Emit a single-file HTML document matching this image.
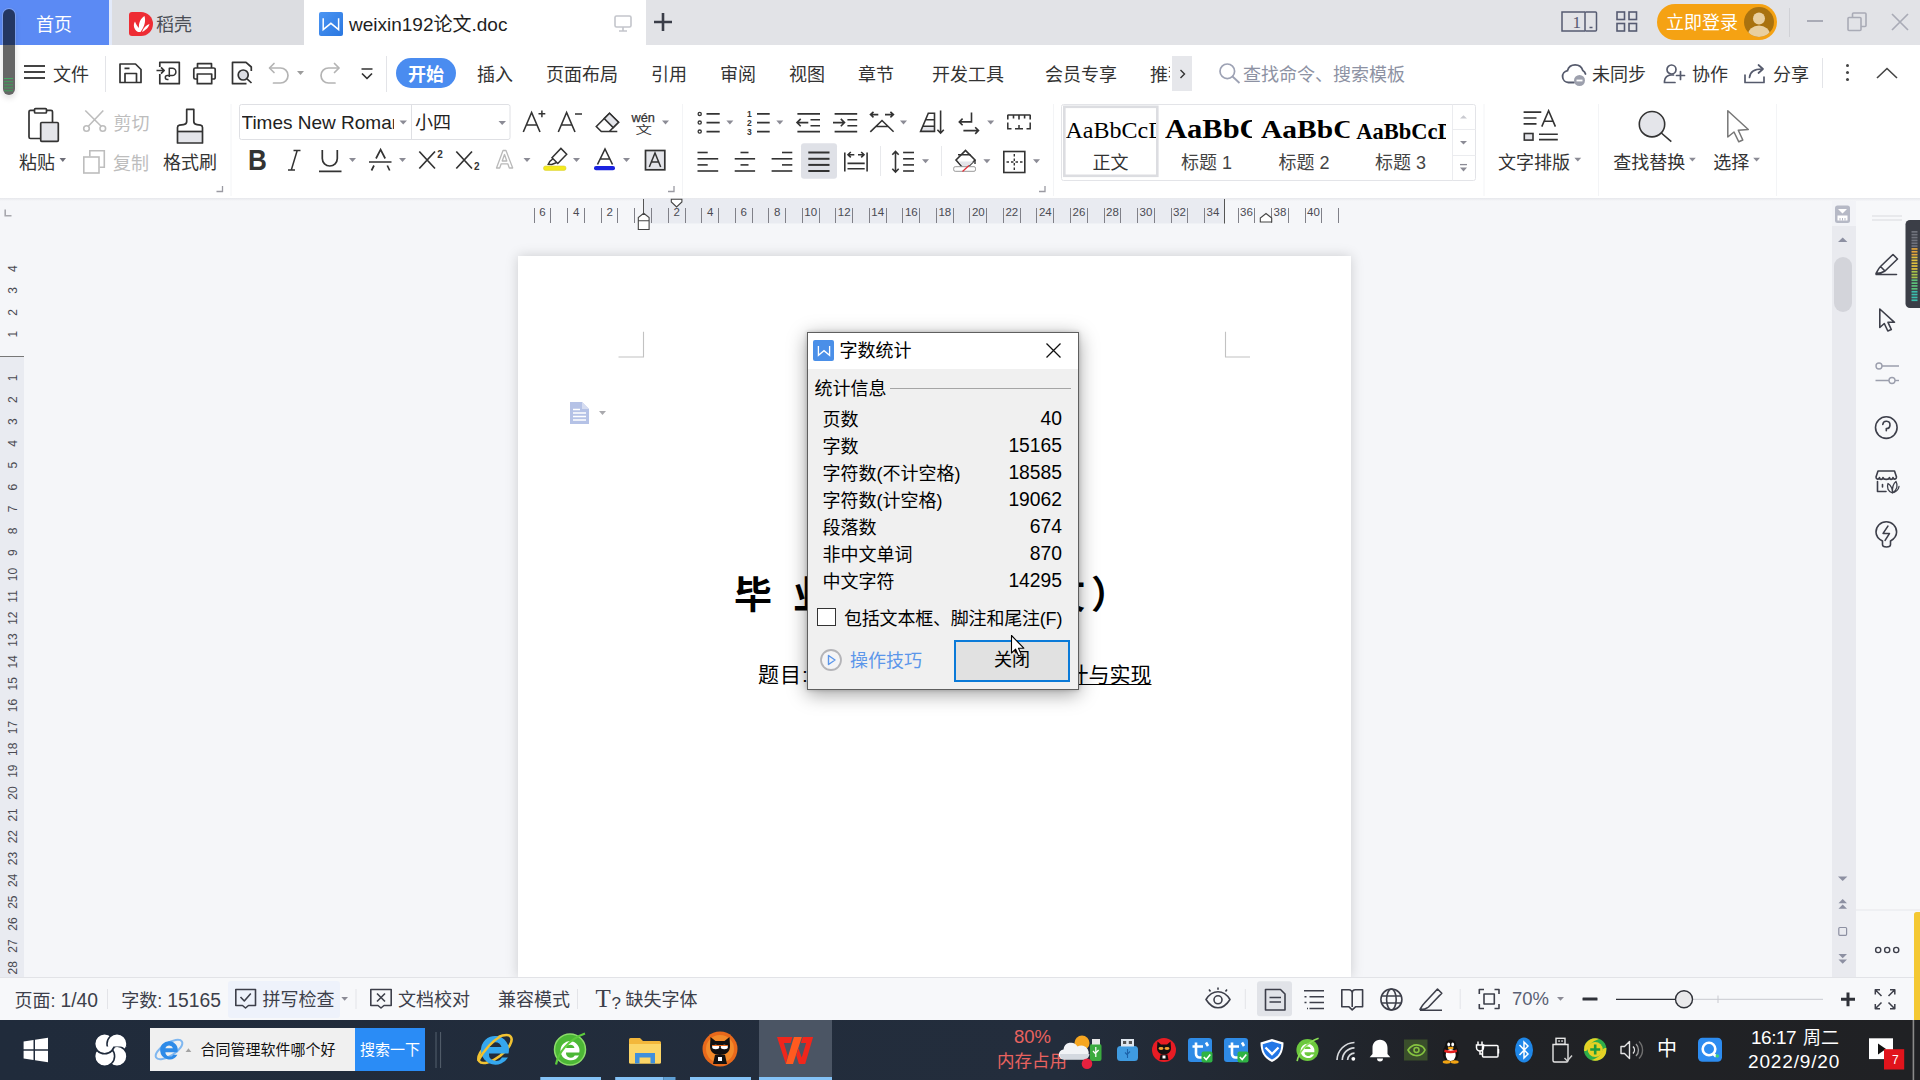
<!DOCTYPE html>
<html lang="zh-CN">
<head>
<meta charset="utf-8">
<title>weixin192论文.doc - WPS</title>
<style>
*{box-sizing:border-box;margin:0;padding:0}
html,body{width:1920px;height:1080px;overflow:hidden}
body{font-family:"Liberation Sans","Noto Sans CJK SC",sans-serif;position:relative;background:#f5f6f9;color:#333;font-size:18px}
.a{position:absolute}
.t{position:absolute;white-space:nowrap;line-height:1}
svg{position:absolute;overflow:visible}
/* ===== top tab bar ===== */
#tabbar{left:0;top:0;width:1920px;height:45px;background:#e2e3e7}
#menurow{left:0;top:45px;width:1920px;height:55px;background:#fff}
#ribbon{left:0;top:100px;width:1920px;height:98px;background:#fff}
#ribshadow{left:0;top:198px;width:1920px;height:3px;background:linear-gradient(#e6e7eb,#f5f6f9)}
#docarea{left:0;top:201px;width:1920px;height:777px;background:#f5f6f9}
#status{left:0;top:977px;width:1920px;height:43px;background:#f7f8fa;border-top:1px solid #e2e3e7}
#taskbar{left:0;top:1020px;width:1920px;height:60px;background:linear-gradient(90deg,#202b3b 0%,#232d3c 55%,#202226 76%,#202124 100%)}
#page{left:518px;top:255.500px;width:833px;height:722.500px;background:#fff;box-shadow:0 0 12px rgba(0,0,0,.17)}
.m{top:66px;font-size:18px;color:#333}
.d{font-size:18px;color:#000}
.n{font-size:19.300px}
.s{top:991px;font-size:18px;color:#3d3f4a}
</style>
</head>
<body>
<div class="a" id="tabbar"></div>
<div class="a" id="menurow"></div>
<div class="a" id="ribbon"></div>
<div class="a" id="ribshadow"></div>
<div class="a" id="docarea"></div>
<div class="a" id="page"></div>
<!--TABBAR-->
<div class="a" style="left:0;top:0;width:109px;height:45px;background:#5b8af4"></div>
<div class="t" style="left:36px;top:16px;font-size:18px;color:#fff">首页</div>
<div class="a" style="left:109px;top:0;width:3px;height:45px;background:#e3eafa"></div><div class="a" style="left:112px;top:0;width:192px;height:45px;background:#dcdde1"></div>
<svg style="left:129px;top:12px" width="24" height="24" viewBox="0 0 24 24"><path d="M3 0H12A12 12 0 0 1 12 24H3A3 3 0 0 1 0 21V3A3 3 0 0 1 3 0Z" fill="#ee2c34"/><path d="M9 20C4.500 17.500 4 12.500 6 9.500C7 12.500 8.500 14.500 10 16C9.500 11 11.500 6.500 15.500 4C17 9 15.500 15 11.500 20Z M13 20C16 18.500 19.500 16 20.500 12C17.500 13 14.500 15.500 13 20Z" fill="#fff"/></svg>
<div class="t" style="left:156px;top:16px;font-size:18px;color:#4a4d55">稻壳</div>
<div class="a" style="left:304px;top:0;width:342px;height:45px;background:#fff"></div>
<svg style="left:319px;top:12px" width="24" height="24" viewBox="0 0 24 24"><defs><linearGradient id="wg" x1="0" y1="0" x2="1" y2="1"><stop offset="0" stop-color="#4b95f3"/><stop offset="1" stop-color="#2a77e0"/></linearGradient></defs><rect width="24" height="24" rx="2" fill="url(#wg)"/><path d="M4.200 6.200V17.600L11.900 11.300L19.600 17.600V6.200" fill="none" stroke="#fff" stroke-width="1.500" stroke-linejoin="miter"/></svg>
<div class="t" id="doctitle" style="left:349px;top:15px;font-size:19px;color:#1e1e1e">weixin192论文.doc</div>
<svg style="left:614px;top:15px" width="18" height="17" viewBox="0 0 18 17"><rect x="1" y="1" width="16" height="11" rx="1.5" fill="none" stroke="#c3c5cb" stroke-width="1.6"/><path d="M9 12V15.5M5 16H13" stroke="#c3c5cb" stroke-width="1.6" fill="none"/></svg>
<svg style="left:653px;top:12px" width="20" height="20" viewBox="0 0 20 20"><path d="M10 1V19M1 10H19" stroke="#3a3d48" stroke-width="2.6" fill="none"/></svg>
<!-- right side of tab bar -->
<svg style="left:1561px;top:11px" width="37" height="21" viewBox="0 0 37 21"><path d="M24 1H1V20H24" fill="none" stroke="#565b72" stroke-width="1.5"/><rect x="24" y="1" width="11.5" height="19" rx="1" fill="none" stroke="#565b72" stroke-width="1.5"/><path d="M28.5 16.5H31.5" stroke="#565b72" stroke-width="1.5"/><text x="11.500" y="17" font-family="Liberation Serif,serif" font-size="17" fill="#565b72">1</text></svg>
<svg style="left:1616px;top:11px" width="22" height="21" viewBox="0 0 22 21"><g fill="none" stroke="#565b72" stroke-width="1.6"><rect x="1" y="1" width="7.5" height="7.5"/><rect x="13" y="1" width="7.5" height="7.5"/><rect x="1" y="12.5" width="7.5" height="7.5"/><rect x="13" y="12.5" width="7.5" height="7.5"/></g></svg>
<div class="a" style="left:1657px;top:4px;width:120px;height:36px;border-radius:18px;background:#f5a213"></div>
<div class="t" style="left:1666px;top:14px;font-size:18px;color:#fff">立即登录</div>
<svg style="left:1744px;top:7px" width="30" height="30" viewBox="0 0 30 30"><defs><clipPath id="avc"><circle cx="15" cy="15" r="15"/></clipPath></defs><circle cx="15" cy="15" r="15" fill="#a9720f"/><g clip-path="url(#avc)" fill="#e9cf9f"><circle cx="15" cy="11.5" r="6"/><ellipse cx="15" cy="28" rx="11" ry="9.5"/></g></svg>
<div class="a" style="left:1789px;top:8px;width:1px;height:29px;background:#d0d1d6"></div>
<div class="a" style="left:1807px;top:20px;width:16px;height:2px;background:#a9abb6"></div>
<svg style="left:1847px;top:12px" width="20" height="20" viewBox="0 0 20 20"><g fill="none" stroke="#a9abb6" stroke-width="1.6"><rect x="1" y="5.5" width="13" height="13" rx="1"/><path d="M5.5 5.5V2A1 1 0 0 1 6.5 1H18A1 1 0 0 1 19 2V13.500A1 1 0 0 1 18 14.500H14"/></g></svg>
<svg style="left:1891px;top:13px" width="18" height="18" viewBox="0 0 18 18"><path d="M1 1L17 17M17 1L1 17" stroke="#a9abb6" stroke-width="1.7" fill="none"/></svg>
<!--MENUROW-->
<div class="a" style="left:23.500px;top:65px;width:21.500px;height:2px;background:#444;box-shadow:0 6px 0 #444,0 12px 0 #444"></div>
<div class="t m" style="left:53px">文件</div>
<div class="a" style="left:105px;top:56px;width:1px;height:36px;background:#e3e4e8"></div>
<svg style="left:100px;top:50px" width="300" height="50" viewBox="0 0 300 50"><g fill="none" stroke="#333" stroke-width="1.7" stroke-linejoin="round">
<path d="M20 14H35.500L41 19.500V32.500H20Z"/><path d="M25 32.500V23.500H36.500V32.500M24.500 18.300H29.500"/>
<path d="M59.800 17V12.300H79.300V33.700H59.800V24"/><path d="M56.500 20.500H64M61 17.300L64.200 20.500L61 23.700"/><path d="M69.300 27V18.300H72.300A3.600 3.600 0 0 1 72.300 25.500H67.300A2 2 0 0 0 67.300 29.500H68.500" stroke-width="1.5"/>
<path d="M97.500 18V13.700H111.500V18"/><path d="M97 29H95.300A1.500 1.500 0 0 1 93.800 27.500V19.500A1.500 1.500 0 0 1 95.300 18H113.700A1.500 1.500 0 0 1 115.200 19.500V27.500A1.500 1.500 0 0 1 113.700 29H112"/><path d="M97.300 24H111.700V33.700H97.300Z"/>
<path d="M146.500 33.700H132.500V12.300H146L151.300 17V21"/><circle cx="143.200" cy="25" r="5" fill="#dcdde3"/><path d="M147 28.800L151.500 33"/>
<path d="M361.500 69H372.500M362 73.500L367 78.500L372 73.500" transform="translate(-100,-50)"/>
</g><g fill="none" stroke="#b4b4b4" stroke-width="1.7" stroke-linecap="round" stroke-linejoin="round">
<path d="M174 13.500L169.500 18L174 22.500"/><path d="M170 18H180.500A7.500 7.500 0 0 1 180.500 33H173.500"/>
<path d="M234.500 13.500L239 18L234.500 22.500"/><path d="M238.500 18H228.500A7.500 7.500 0 0 0 228.500 33H235"/>
</g><path d="M197 21H204L200.500 25Z" fill="#9c9c9c"/></svg>
<div class="a" style="left:386px;top:56px;width:1px;height:36px;background:#e3e4e8"></div>
<div class="a" style="left:396px;top:58px;width:60px;height:30px;border-radius:15px;background:#4a8cf0"></div>
<div class="t m" style="left:408px;color:#fff;font-weight:bold">开始</div>
<div class="t m" style="left:477px">插入</div>
<div class="t m" style="left:546px">页面布局</div>
<div class="t m" style="left:651px">引用</div>
<div class="t m" style="left:720px">审阅</div>
<div class="t m" style="left:789px">视图</div>
<div class="t m" style="left:858px">章节</div>
<div class="t m" style="left:932px">开发工具</div>
<div class="t m" style="left:1045px">会员专享</div>
<div class="t m" style="left:1150px;width:20px;overflow:hidden">推荐</div>
<div class="a" style="left:1172px;top:56px;width:20px;height:35px;background:#e6e7eb"></div>
<svg style="left:1179px;top:69px" width="7" height="10" viewBox="0 0 7 10"><path d="M1.500 1L5.500 5L1.500 9" fill="none" stroke="#333" stroke-width="1.400"/></svg>
<svg style="left:1218px;top:62px" width="24" height="24" viewBox="0 0 24 24"><circle cx="9.300" cy="9.300" r="7.300" fill="none" stroke="#9da2b4" stroke-width="1.700"/><path d="M14.500 14.500L21.500 21" stroke="#9da2b4" stroke-width="1.800" fill="none"/></svg>
<div class="t m" style="left:1243px;color:#8d92a3">查找命令、搜索模板</div>
<svg style="left:1561px;top:62px" width="28" height="26" viewBox="0 0 28 26"><path d="M13 20.500H7.500A6 6 0 0 1 6.500 8.600A8 8 0 0 1 21.800 8.500A5.500 5.500 0 0 1 24.500 12" fill="none" stroke="#555a6c" stroke-width="1.800" stroke-linecap="round"/><circle cx="18.500" cy="18.500" r="5.500" fill="#9da0ad"/><path d="M15.500 18.500H21.500" stroke="#fff" stroke-width="1.800"/></svg>
<div class="t m" style="left:1592px">未同步</div>
<svg style="left:1662px;top:62px" width="26" height="24" viewBox="0 0 26 24"><g fill="none" stroke="#555a6c" stroke-width="1.700" stroke-linecap="round"><circle cx="9.500" cy="7.500" r="4.500"/><path d="M13 20.500H2.500V19A6.500 6.500 0 0 1 9 13H11.500"/><path d="M18.500 9.500V17.500M14.500 13.500H22.500"/></g></svg>
<div class="t m" style="left:1692px">协作</div>
<svg style="left:1743px;top:62px" width="26" height="24" viewBox="0 0 26 24"><g fill="none" stroke="#555a6c" stroke-width="1.700" stroke-linecap="round" stroke-linejoin="round"><path d="M2 13V20.500H21V15"/><path d="M6.500 15.500C7 9.500 12 7 19 7"/><path d="M15.500 3L20 7L15.500 11"/></g></svg>
<div class="t m" style="left:1773px">分享</div>
<div class="a" style="left:1822px;top:58px;width:1px;height:30px;background:#e3e4e8"></div>
<div class="a" style="left:1846px;top:64px;width:3px;height:3px;border-radius:2px;background:#444;box-shadow:0 7px 0 #444,0 14px 0 #444"></div>
<svg style="left:1876px;top:67px" width="22" height="12" viewBox="0 0 22 12"><path d="M1 11L11 1.500L21 11" fill="none" stroke="#444" stroke-width="1.600"/></svg>
<!--RIBBON-->
<svg style="left:0;top:100px" width="1920" height="100" viewBox="0 100 1920 100"><g fill="none" stroke="#333" stroke-width="1.7" stroke-linejoin="round">
<path d="M40.500 138.500H30.500A1.500 1.500 0 0 1 29 137V111.800A1.500 1.500 0 0 1 30.500 110.300H34.500M46.500 110.300H51A1.500 1.500 0 0 1 52.500 111.800V122.500"/>
<rect x="34.500" y="108.700" width="12" height="4.300" rx="1"/>
<rect x="40.700" y="122.500" width="17.600" height="18.800" rx="1" fill="#e4e5ea"/>
<path d="M177.500 143V131.500H202.500V143Z" fill="#e4e5ea" stroke="none"/>
<path d="M186.700 109.300H193.800V121.500C193.800 123.500 195 124.300 197 124.600L200.500 125.200C201.800 125.500 202.500 126.300 202.500 127.500V143H177.500V127.500C177.500 126.300 178.200 125.500 179.500 125.200L183.500 124.600C185.500 124.300 186.700 123.500 186.700 121.500Z"/><path d="M177.500 131.500H202.500"/>
</g>
<g fill="none" stroke="#bdbdbd" stroke-width="1.600">
<path d="M85.300 110.500L101.200 126.300M103.300 110.500L88.300 126.300"/><circle cx="86.500" cy="128.500" r="2.800"/><circle cx="102.800" cy="128.500" r="2.800"/>
<path d="M89.800 156.500V150.800H104.300V167.300H99.500"/><rect x="83.800" y="157" width="15.200" height="16"/>
</g>
<path d="M59.5 158.0H66.0L62.8 162.0Z" fill="#6e6e78"/>
<path d="M222.5 186V191.500H216.5" fill="none" stroke="#9a9aa2" stroke-width="1.300"/>
<path d="M674.0 186V191.500H668.0" fill="none" stroke="#9a9aa2" stroke-width="1.300"/>
<path d="M1045.0 186V191.500H1039.0" fill="none" stroke="#9a9aa2" stroke-width="1.300"/>
<path d="M231.0 104V196" stroke="#f3f4f6" stroke-width="1"/>
<path d="M682.5 104V196" stroke="#f3f4f6" stroke-width="1"/>
<path d="M1053.5 104V196" stroke="#f3f4f6" stroke-width="1"/>
<path d="M1484.0 104V196" stroke="#f3f4f6" stroke-width="1"/>
<path d="M1598.5 104V196" stroke="#f3f4f6" stroke-width="1"/>
<path d="M1776.5 104V196" stroke="#f3f4f6" stroke-width="1"/>
<rect x="239.500" y="104.500" width="270.500" height="35" rx="2" fill="#fff" stroke="#dfe0e4" stroke-width="1"/><path d="M411.500 104.500V139.500" stroke="#dfe0e4"/>
<path d="M399.5 120.5H407.0L403.2 124.5Z" fill="#8b8b95"/>
<path d="M498.5 121.0H506.0L502.2 125.0Z" fill="#8b8b95"/>
<g fill="none" stroke="#333" stroke-width="1.700">
<path d="M293.500 150.500H300.500M288 170H295M297.200 150.500L291.300 170" stroke-width="1.500"/>
<path d="M322.300 150V158.500A7.500 7.500 0 0 0 337.300 158.500V150M319 171.300H341.500"/>
<path d="M376 158.500L380.600 149.500L385.200 158.500M374 165.500L371.500 170.500M387.300 165.500L389.700 170.500M369 162H391.500"/>
<path d="M419.300 151.500L435 168.500M435 151.500L419.300 168.500M456.300 151.500L472 168.500M472 151.500L456.300 168.500"/>
<path d="M523.300 132L531.600 112.500L540 132M526.300 125H537M558.300 132L566.600 112.500L575 132M561.300 125H572" stroke-width="1.600"/>
<path d="M538.500 113.800H545.300M541.900 110.400V117.200M575 114H582" stroke-width="1.500"/>
<path d="M596.300 126.500L609.500 113.300L618.500 122.300L609.300 131.500H601.300Z M605 131.500H617.300" stroke-width="1.600"/><path d="M609.500 113.300L618.500 122.300L613.200 127.600L604.200 118.600Z" fill="#e4e5ea" stroke-width="1.600"/>
<path d="M560.900 148.400L566.700 154.200L557.800 163.500L552 157.700Z M553 158.700L549.800 161.500L548.300 164.300L551.800 164.500L556.800 162.500" stroke-width="1.500"/>
<path d="M597.500 164.500L605 149L612.500 164.500M600.300 159H609.700" stroke-width="1.600"/>
<rect x="645.500" y="150.500" width="19.300" height="19.300" fill="#e4e5ea"/><path d="M649.300 167L655 153L660.700 167M651.500 162H658.500" stroke-width="1.500"/>
</g>
<rect x="543.500" y="166" width="22.500" height="4.400" rx="2" fill="#f4ea1c" stroke="#d8cf3a" stroke-width=".6"/>
<rect x="594" y="166" width="21" height="4.200" rx="2" fill="#1a22e0"/>
<path d="M496.500 168L503 150.500H506L512.700 168H509.300L507.800 163.800H501.200L499.700 168Z M502.200 161H506.800L504.500 154.500Z" fill="#fff" stroke="#b9b9b9" stroke-width="1.300" stroke-linejoin="round"/>
<path d="M349.0 158.0H356.0L352.5 162.0Z" fill="#8b8b95"/>
<path d="M399.0 158.0H406.0L402.5 162.0Z" fill="#8b8b95"/>
<path d="M523.5 158.0H530.5L527.0 162.0Z" fill="#8b8b95"/>
<path d="M573.0 158.0H580.0L576.5 162.0Z" fill="#8b8b95"/>
<path d="M623.0 158.0H630.0L626.5 162.0Z" fill="#8b8b95"/>
<path d="M662.0 120.5H669.0L665.5 124.5Z" fill="#8b8b95"/>
<g fill="none" stroke="#333" stroke-width="1.600">
<circle cx="699.700" cy="113.9" r="1.600" stroke-width="1.300"/><path d="M706.500 113.9H719.700M757 113.9H769.700"/>
<circle cx="699.700" cy="122.6" r="1.600" stroke-width="1.300"/><path d="M706.500 122.6H719.700M757 122.6H769.700"/>
<circle cx="699.700" cy="131.6" r="1.600" stroke-width="1.300"/><path d="M706.500 131.6H719.700M757 131.6H769.700"/>
<path d="M797.400 113.900H820M797.400 131.600H820M810.500 119.700H820M810.500 125.800H820M797 122.600H808.300M800.700 118.900L797 122.600L800.700 126.300"/>
<path d="M834.600 113.900H857.200M834.600 131.600H857.200M847.400 119.700H857.200M847.400 125.800H857.200M833 122.600H844.500M840.800 118.900L844.500 122.600L840.800 126.300"/>
<path d="M870.300 131.800L882 120.500L893.600 131.800M875.600 126.500H888.400M870.500 114.600H878.300M873.500 111.800L870.500 114.600L873.500 117.400M885 114.600H893.400M890.400 111.800L893.400 114.600L890.400 117.400"/>
<path d="M923 126.200H934.500V131.400H920.600Z" fill="#e4e5ea" stroke="none"/>
<path d="M928.300 113.300H934.500V131.400H920.600Z M925.800 119.700H934.500M923 126.200H934.500M940.600 110.500V133M937.400 129.800L940.600 133L943.800 129.800"/>
<path d="M971.500 112.400V121.900H959.300M962.600 118.600L959.300 121.900L962.600 125.200M963.400 130.600H978.500M975.200 127.300L978.500 130.600L975.200 133.900"/>
<path d="M1007.500 115H1030.500M1007.800 115V119.500M1013.500 115V118.500M1019 115V119.500M1024.600 115V118.500M1030.200 115V119.500"/>
<path d="M1007.800 122.500V128.700H1011.500M1015 128.700H1023M1019 125V128.700M1026.500 128.700H1030.200V122.500" stroke-width="1.500"/>
<path d="M697.500 152.5H707.7"/>
<path d="M740.5 152.5H748.5"/>
<path d="M782.0 152.5H792.300"/>
<path d="M903.100 152.5H914"/>
<path d="M697.500 158.8H718.2"/>
<path d="M734.7 158.8H755.1"/>
<path d="M771.6 158.8H792.300"/>
<path d="M903.100 158.8H914"/>
<path d="M697.500 164.9H707.7"/>
<path d="M740.5 164.9H748.5"/>
<path d="M782.0 164.9H792.300"/>
<path d="M903.100 164.9H914"/>
<path d="M697.500 171.0H718.2"/>
<path d="M734.7 171.0H755.1"/>
<path d="M771.6 171.0H792.300"/>
<path d="M903.100 171.0H914"/>
</g>
<rect x="801" y="143.300" width="36" height="35.500" rx="3" fill="#dfe1e7"/>
<g fill="none" stroke="#333" stroke-width="1.600">
<path d="M808.300 152.5H829.500" stroke-width="2"/>
<path d="M808.300 158.8H829.500" stroke-width="2"/>
<path d="M808.300 164.9H829.500" stroke-width="2"/>
<path d="M808.300 171.0H829.500" stroke-width="2"/>
<path d="M844.800 152.500V171.500M867.100 152.500V171.500M848 154.700H854.300M858 154.700H864M850.800 152L848 154.700L850.800 157.400M861.200 152L864 154.700L861.200 157.400M847.500 163.400H864.700M847.500 168.800H864.700"/>
<path d="M895.500 151.500V172M892.300 154.700L895.500 151.500L898.700 154.700M892.300 168.800L895.500 172L898.700 168.800"/>
<path d="M956 160L965.500 150.500L975 160L967 168H963Z" /><path d="M958.500 161.500H973.500L967 167.500H963.500Z" fill="#e4e5ea" stroke="none"/><path d="M958 154.700H970.500M975 160V164" stroke-width="1.400"/>
<rect x="953.700" y="166.700" width="21.800" height="4.600" rx="1.500" fill="#fff" stroke="#999" stroke-width="1"/><path d="M962.500 171.500L969 165.500" stroke="#e0313a" stroke-width="1.200"/>
<rect x="1003.800" y="151.500" width="21" height="21"/><path d="M1014.300 154V170M1006.500 162H1022.500" stroke-dasharray="2.500 2" stroke-width="1.400"/>
</g>
<path d="M880.500 146V176M941.500 146V176" stroke="#e8e9ec" stroke-width="1"/>
<path d="M726.4 120.5H733.4L729.9 124.5Z" fill="#8b8b95"/>
<path d="M776.3 120.5H783.3L779.8 124.5Z" fill="#8b8b95"/>
<path d="M900.0 120.5H907.0L903.5 124.5Z" fill="#8b8b95"/>
<path d="M987.2 120.5H994.2L990.7 124.5Z" fill="#8b8b95"/>
<path d="M922.0 159.3H929.0L925.5 163.3Z" fill="#8b8b95"/>
<path d="M983.4 159.3H990.4L986.9 163.3Z" fill="#8b8b95"/>
<path d="M1033.0 159.3H1040.0L1036.5 163.3Z" fill="#8b8b95"/>
<text x="747" y="117" font-family="Liberation Sans,sans-serif" font-weight="bold" font-size="8.500" fill="#333">1</text>
<text x="747" y="126" font-family="Liberation Sans,sans-serif" font-weight="bold" font-size="8.500" fill="#333">2</text>
<text x="747" y="135" font-family="Liberation Sans,sans-serif" font-weight="bold" font-size="8.500" fill="#333">3</text>
<text x="437.300" y="158.300" font-family="Liberation Sans,sans-serif" font-weight="bold" font-size="10" fill="#333">2</text><text x="474" y="170.300" font-family="Liberation Sans,sans-serif" font-weight="bold" font-size="10" fill="#333">2</text>
<text x="631.500" y="121.500" font-family="Liberation Sans,sans-serif" font-size="12.500" fill="#333" stroke="#333" stroke-width=".25" textLength="23.500" lengthAdjust="spacingAndGlyphs">wén</text>
<text x="635.500" y="134" font-family="Liberation Sans,Noto Sans CJK SC,sans-serif" font-size="16.500" fill="#333" transform="translate(0,45.500) scale(1,.66)">文</text>
<rect x="1061.500" y="104.500" width="414" height="76" rx="2" fill="#fff" stroke="#e3e4e8"/><path d="M1452.500 104.500V180.500M1452.500 129.500H1475.500M1452.500 155.500H1475.500" stroke="#ebecef"/>
<rect x="1064.300" y="106.800" width="93" height="69" fill="none" stroke="#dcdde1" stroke-width="2.600"/>
<path d="M1460 118.600H1467L1463.500 115.300Z" fill="#c9cad0"/><path d="M1460 141H1467L1463.500 144.500Z" fill="#8b8b95"/><path d="M1460 164.600H1467" stroke="#8b8b95" stroke-width="1.300"/><path d="M1460 167.500H1467L1463.500 171.500Z" fill="#8b8b95"/>
<g fill="none" stroke="#333" stroke-width="1.600">
<path d="M1523.600 112.100H1541.300M1523.600 118H1536.500M1523.600 123.900H1536.500M1539 134.200H1557.800M1539 139.600H1557.800M1541.800 126.600L1548.600 110.800L1555.400 126.600M1544 121.300H1553.200"/><rect x="1524.300" y="133.500" width="8.700" height="6.600" fill="#e4e5ea"/>
<circle cx="1652" cy="124.200" r="12.700" fill="#e4e5ea"/><path d="M1661.300 133L1671.300 141.600"/>
</g>
<path d="M1727.800 110.800V137L1734 132L1738.800 141.800L1742.800 140L1738.300 130.300L1748.300 129.500Z" fill="#fff" stroke="#777" stroke-width="1.500" stroke-linejoin="round"/>
<path d="M1574.4 157.8H1581.2L1577.8 161.6Z" fill="#8b8b95"/>
<path d="M1689.0 157.8H1695.8L1692.4 161.6Z" fill="#8b8b95"/>
<path d="M1753.2 157.8H1760.0L1756.6 161.6Z" fill="#8b8b95"/>
</svg>
<div class="t" style="left:19px;top:154px;color:#333">粘贴</div>
<div class="t" style="left:113.5px;top:115px;color:#bdbdbd">剪切</div>
<div class="t" style="left:113px;top:155px;color:#bdbdbd">复制</div>
<div class="t" style="left:163px;top:154px;color:#333">格式刷</div>
<div class="t" id="fontname" style="left:241.500px;top:110.500px;width:152px;height:24px;overflow:hidden;font-size:19px;line-height:24px;color:#222">Times New Roman</div>
<div class="t" style="left:415px;top:113.5px;color:#222">小四</div>
<div class="t" style="left:247.500px;top:144.500px;font-size:29.500px;font-weight:bold;line-height:30px;color:#333;transform:scaleX(.885);transform-origin:0 0">B</div>
<div class="t" style="left:1065.5px;top:114.5px;width:90.5px;height:30px;overflow:hidden;font-family:'Liberation Serif',serif;font-size:24px;line-height:30px;color:#000;letter-spacing:0px;transform:scaleX(1);transform-origin:0 0;">AaBbCcDd</div>
<div class="t" style="left:1165px;top:114px;width:77.4336px;height:30px;overflow:hidden;font-family:'Liberation Serif',serif;font-size:27px;line-height:30px;color:#000;letter-spacing:0px;transform:scaleX(1.13);transform-origin:0 0;font-weight:bold;">AaBbCc</div>
<div class="t" style="left:1260.7px;top:115px;width:75px;height:30px;overflow:hidden;font-family:'Liberation Serif',serif;font-size:25px;line-height:30px;color:#000;letter-spacing:0px;transform:scaleX(1.18);transform-origin:0 0;font-weight:bold;">AaBbCc</div>
<div class="t" style="left:1356.3px;top:116.5px;width:90px;height:30px;overflow:hidden;font-family:'Liberation Serif',serif;font-size:22.5px;line-height:30px;color:#000;letter-spacing:0px;transform:scaleX(1);transform-origin:0 0;font-weight:bold;">AaBbCcD</div>
<div class="t" style="left:1092.5px;top:154px;color:#333">正文</div>
<div class="t" style="left:1181px;top:154px;color:#444">标题 1</div>
<div class="t" style="left:1278.4px;top:154px;color:#444">标题 2</div>
<div class="t" style="left:1375px;top:154px;color:#444">标题 3</div>
<div class="t" style="left:1498px;top:153.5px;color:#333">文字排版</div>
<div class="t" style="left:1613.2px;top:153.5px;color:#333">查找替换</div>
<div class="t" style="left:1713.3px;top:153.5px;color:#333">选择</div>
<!--RULERS-->
<svg style="left:0;top:198px" width="1920" height="782" viewBox="0 198 1920 782" font-family="Liberation Sans,sans-serif">
<rect x="643.700" y="199" width="580.700" height="24.500" fill="#e9ebf1"/>
<rect x="0" y="356.500" width="24" height="621" fill="#e9ebf1"/>
<path d="M0 356.500H24" stroke="#777" stroke-width="1"/>
<path d="M5.200 209.500V215.800H11.500" fill="none" stroke="#a8a8ae" stroke-width="1.600"/>
<path d="M534.5 208V223M550.5 208V223M567.5 208V223M584.5 208V223M601.5 208V223M617.5 208V223M634.5 208V223M651.5 208V223M668.5 208V223M685.5 208V223M701.5 208V223M718.5 208V223M735.5 208V223M752.5 208V223M768.5 208V223M785.5 208V223M802.5 208V223M819.5 208V223M835.5 208V223M852.5 208V223M869.5 208V223M886.5 208V223M902.5 208V223M919.5 208V223M936.5 208V223M953.5 208V223M969.5 208V223M986.5 208V223M1003.5 208V223M1020.5 208V223M1036.5 208V223M1053.5 208V223M1070.5 208V223M1087.5 208V223M1104.5 208V223M1120.5 208V223M1137.5 208V223M1154.5 208V223M1171.5 208V223M1187.5 208V223M1204.5 208V223M1238.5 208V223M1254.5 208V223M1271.5 208V223M1288.5 208V223M1305.5 208V223M1321.5 208V223M1338.5 208V223" stroke="#808088" stroke-width="1" fill="none"/>
<path d="M1224.500 199V223.500M643.500 199V213.500" stroke="#555" stroke-width="1" fill="none"/>
<text x="542.5" y="215.800" font-size="11.500" fill="#4a4a52" text-anchor="middle">6</text>
<text x="576.1" y="215.800" font-size="11.500" fill="#4a4a52" text-anchor="middle">4</text>
<text x="609.6" y="215.800" font-size="11.500" fill="#4a4a52" text-anchor="middle">2</text>
<text x="676.6" y="215.800" font-size="11.500" fill="#4a4a52" text-anchor="middle">2</text>
<text x="710.1" y="215.800" font-size="11.500" fill="#4a4a52" text-anchor="middle">4</text>
<text x="743.7" y="215.800" font-size="11.500" fill="#4a4a52" text-anchor="middle">6</text>
<text x="777.2" y="215.800" font-size="11.500" fill="#4a4a52" text-anchor="middle">8</text>
<text x="810.7" y="215.800" font-size="11.500" fill="#4a4a52" text-anchor="middle">10</text>
<text x="844.2" y="215.800" font-size="11.500" fill="#4a4a52" text-anchor="middle">12</text>
<text x="877.7" y="215.800" font-size="11.500" fill="#4a4a52" text-anchor="middle">14</text>
<text x="911.3" y="215.800" font-size="11.500" fill="#4a4a52" text-anchor="middle">16</text>
<text x="944.8" y="215.800" font-size="11.500" fill="#4a4a52" text-anchor="middle">18</text>
<text x="978.3" y="215.800" font-size="11.500" fill="#4a4a52" text-anchor="middle">20</text>
<text x="1011.8" y="215.800" font-size="11.500" fill="#4a4a52" text-anchor="middle">22</text>
<text x="1045.3" y="215.800" font-size="11.500" fill="#4a4a52" text-anchor="middle">24</text>
<text x="1078.9" y="215.800" font-size="11.500" fill="#4a4a52" text-anchor="middle">26</text>
<text x="1112.4" y="215.800" font-size="11.500" fill="#4a4a52" text-anchor="middle">28</text>
<text x="1145.9" y="215.800" font-size="11.500" fill="#4a4a52" text-anchor="middle">30</text>
<text x="1179.4" y="215.800" font-size="11.500" fill="#4a4a52" text-anchor="middle">32</text>
<text x="1212.9" y="215.800" font-size="11.500" fill="#4a4a52" text-anchor="middle">34</text>
<text x="1246.5" y="215.800" font-size="11.500" fill="#4a4a52" text-anchor="middle">36</text>
<text x="1280.0" y="215.800" font-size="11.500" fill="#4a4a52" text-anchor="middle">38</text>
<text x="1313.5" y="215.800" font-size="11.500" fill="#4a4a52" text-anchor="middle">40</text>
<path d="M638.300 220.800V217.500L643.700 213.300L649.100 217.500V220.800Z M638.300 220.800H649.100V229.500H638.300Z" fill="#fff" stroke="#444" stroke-width="1.100"/>
<path d="M671.300 199.200H681.900V202L676.600 207L671.300 202Z" fill="#fff" stroke="#444" stroke-width="1.100"/>
<path d="M1260.300 222V218L1266 213.500L1271.700 218V222Z" fill="#fff" stroke="#444" stroke-width="1.100"/>
<text transform="translate(16.500,334.1) rotate(-90)" font-size="12" fill="#4a4a52" text-anchor="middle">1</text>
<text transform="translate(16.500,312.3) rotate(-90)" font-size="12" fill="#4a4a52" text-anchor="middle">2</text>
<text transform="translate(16.500,290.4) rotate(-90)" font-size="12" fill="#4a4a52" text-anchor="middle">3</text>
<text transform="translate(16.500,268.6) rotate(-90)" font-size="12" fill="#4a4a52" text-anchor="middle">4</text>
<text transform="translate(16.500,377.9) rotate(-90)" font-size="12" fill="#4a4a52" text-anchor="middle">1</text>
<text transform="translate(16.500,399.7) rotate(-90)" font-size="12" fill="#4a4a52" text-anchor="middle">2</text>
<text transform="translate(16.500,421.6) rotate(-90)" font-size="12" fill="#4a4a52" text-anchor="middle">3</text>
<text transform="translate(16.500,443.4) rotate(-90)" font-size="12" fill="#4a4a52" text-anchor="middle">4</text>
<text transform="translate(16.500,465.2) rotate(-90)" font-size="12" fill="#4a4a52" text-anchor="middle">5</text>
<text transform="translate(16.500,487.1) rotate(-90)" font-size="12" fill="#4a4a52" text-anchor="middle">6</text>
<text transform="translate(16.500,509.0) rotate(-90)" font-size="12" fill="#4a4a52" text-anchor="middle">7</text>
<text transform="translate(16.500,530.8) rotate(-90)" font-size="12" fill="#4a4a52" text-anchor="middle">8</text>
<text transform="translate(16.500,552.6) rotate(-90)" font-size="12" fill="#4a4a52" text-anchor="middle">9</text>
<text transform="translate(16.500,574.5) rotate(-90)" font-size="12" fill="#4a4a52" text-anchor="middle">10</text>
<text transform="translate(16.500,596.4) rotate(-90)" font-size="12" fill="#4a4a52" text-anchor="middle">11</text>
<text transform="translate(16.500,618.2) rotate(-90)" font-size="12" fill="#4a4a52" text-anchor="middle">12</text>
<text transform="translate(16.500,640.0) rotate(-90)" font-size="12" fill="#4a4a52" text-anchor="middle">13</text>
<text transform="translate(16.500,661.9) rotate(-90)" font-size="12" fill="#4a4a52" text-anchor="middle">14</text>
<text transform="translate(16.500,683.8) rotate(-90)" font-size="12" fill="#4a4a52" text-anchor="middle">15</text>
<text transform="translate(16.500,705.6) rotate(-90)" font-size="12" fill="#4a4a52" text-anchor="middle">16</text>
<text transform="translate(16.500,727.5) rotate(-90)" font-size="12" fill="#4a4a52" text-anchor="middle">17</text>
<text transform="translate(16.500,749.3) rotate(-90)" font-size="12" fill="#4a4a52" text-anchor="middle">18</text>
<text transform="translate(16.500,771.2) rotate(-90)" font-size="12" fill="#4a4a52" text-anchor="middle">19</text>
<text transform="translate(16.500,793.0) rotate(-90)" font-size="12" fill="#4a4a52" text-anchor="middle">20</text>
<text transform="translate(16.500,814.9) rotate(-90)" font-size="12" fill="#4a4a52" text-anchor="middle">21</text>
<text transform="translate(16.500,836.7) rotate(-90)" font-size="12" fill="#4a4a52" text-anchor="middle">22</text>
<text transform="translate(16.500,858.5) rotate(-90)" font-size="12" fill="#4a4a52" text-anchor="middle">23</text>
<text transform="translate(16.500,880.4) rotate(-90)" font-size="12" fill="#4a4a52" text-anchor="middle">24</text>
<text transform="translate(16.500,902.2) rotate(-90)" font-size="12" fill="#4a4a52" text-anchor="middle">25</text>
<text transform="translate(16.500,924.1) rotate(-90)" font-size="12" fill="#4a4a52" text-anchor="middle">26</text>
<text transform="translate(16.500,946.0) rotate(-90)" font-size="12" fill="#4a4a52" text-anchor="middle">27</text>
<text transform="translate(16.500,967.8) rotate(-90)" font-size="12" fill="#4a4a52" text-anchor="middle">28</text>
</svg>
<!--DOC-->
<svg style="left:500px;top:240px" width="900" height="740" viewBox="500 240 900 740">
<path d="M618.500 357H643.500V331.700M1250 357H1225.500V331.700" fill="none" stroke="#c2c2c2" stroke-width="1.100"/>
<path d="M570 402H582L589 409V424H570Z" fill="#b5c2e6"/><path d="M582 402V409H589" fill="#d5dcf1"/><path d="M573 409.500H580M573 413H586M573 416.500H586M573 420H586" stroke="#fff" stroke-width="1.500"/>
<path d="M599 411H606L602.500 415Z" fill="#a9a9ad"/>
</svg>
<!--DIALOG-->
<div class="t" id="doctit" style="left:734px;top:576px;font-size:38px;font-weight:bold;color:#000;letter-spacing:21px">毕业设计</div>
<div class="t" id="doctit2" style="left:959px;top:576px;font-size:38px;font-weight:bold;color:#000;letter-spacing:6px">（论文<span id="rp" style="letter-spacing:0">）</span></div>
<div class="t" id="docsub" style="left:758px;top:663.500px;font-size:21px;font-weight:400;color:#000;letter-spacing:1px">题目:</div>
<div class="t" id="docsub2" style="right:768.500px;top:663.500px;font-size:21px;font-weight:400;color:#000;text-decoration:underline;text-underline-offset:1.500px;text-decoration-thickness:1.200px">设计与实现</div>
<div class="a" id="dlg" style="left:807px;top:332px;width:272px;height:358px;background:#f0f0f0;border:1px solid #5f5f5f;box-shadow:0 4px 18px rgba(0,0,0,.38),0 0 4px rgba(0,0,0,.2)"></div>
<div class="a" style="left:808px;top:333px;width:270px;height:36px;background:#fff"></div>
<svg style="left:812.500px;top:339.500px" width="21" height="21" viewBox="0 0 21 21"><rect width="21" height="21" rx="2" fill="#4a8fe8"/><path d="M5.400 6V15.300L11 10.700L16.600 15.300V6" fill="none" stroke="#fff" stroke-width="1.300"/></svg>
<div class="t d" style="left:839.500px;top:341.500px">字数统计</div>
<svg style="left:1046px;top:343px" width="15" height="15" viewBox="0 0 15 15"><path d="M.5 .5L14.500 14.500M14.500 .5L.5 14.500" stroke="#111" stroke-width="1.300" fill="none"/></svg>
<div class="t d" style="left:814.500px;top:380px">统计信息</div>
<div class="a" style="left:890px;top:388px;width:181px;height:1px;background:#a5a5a5"></div>
<div class="t d" style="left:822.500px;top:410.5px">页数</div>
<div class="t d n" style="right:858px;top:409px">40</div>
<div class="t d" style="left:822.500px;top:437.5px">字数</div>
<div class="t d n" style="right:858px;top:436px">15165</div>
<div class="t d" style="left:822.500px;top:464.5px">字符数(不计空格)</div>
<div class="t d n" style="right:858px;top:463px">18585</div>
<div class="t d" style="left:822.500px;top:491.5px">字符数(计空格)</div>
<div class="t d n" style="right:858px;top:490px">19062</div>
<div class="t d" style="left:822.500px;top:518.5px">段落数</div>
<div class="t d n" style="right:858px;top:517px">674</div>
<div class="t d" style="left:822.500px;top:545.5px">非中文单词</div>
<div class="t d n" style="right:858px;top:544px">870</div>
<div class="t d" style="left:822.500px;top:572.5px">中文字符</div>
<div class="t d n" style="right:858px;top:571px">14295</div>
<div class="a" style="left:817px;top:607.500px;width:19px;height:18.500px;background:#fff;border:1px solid #333"></div>
<div class="t d" id="cblabel" style="left:844px;top:609.500px;letter-spacing:-.2px">包括文本框、脚注和尾注(F)</div>
<svg style="left:819px;top:648px" width="24" height="24" viewBox="0 0 24 24"><circle cx="12" cy="12" r="10" fill="#f4f4f6" stroke="#b4b4b8" stroke-width="1.800"/><path d="M9.500 7.500V16.500L16 12Z" fill="none" stroke="#5b96ea" stroke-width="1.400" stroke-linejoin="round"/></svg>
<div class="t d" style="left:850px;top:651.500px;color:#5b96ea">操作技巧</div>
<div class="a" style="left:954px;top:639.500px;width:116px;height:42.500px;background:#e1e1e1;border:2px solid #0a7ad8"></div>
<div class="t d" style="left:994px;top:651px">关闭</div>
<svg style="left:1010px;top:634px" width="16" height="24" viewBox="0 0 16 24"><path d="M1.500 1.500V19L5.600 15.200L8.600 22L11.400 20.800L8.500 14.200H13.800Z" fill="#fff" stroke="#000" stroke-width="1.100" stroke-linejoin="round"/></svg>
<!--SIDEBAR-->
<div class="a" style="left:1832px;top:201px;width:24px;height:25px;background:#f2f3f7"></div><div class="a" style="left:1832px;top:226px;width:24px;height:752px;background:#e9eaef"></div>
<div class="a" style="left:1856px;top:201px;width:64px;height:777px;background:#f7f8fa"></div>
<div class="a" style="left:1833.500px;top:257px;width:18.500px;height:55px;border-radius:9px;background:#d3d4da"></div>
<svg style="left:1800px;top:195px" width="120" height="790" viewBox="1800 195 120 790">
<rect x="1835" y="205.500" width="15" height="17.500" rx="2.500" fill="#b6b9c6"/><path d="M1838 209H1847L1842.500 213.500Z M1837.500 215.500H1847.500V220.500H1837.500Z" fill="#fff"/><path d="M1840 218V220.500M1842.500 218V220.500M1845 218V220.500" stroke="#b6b9c6" stroke-width="1"/>
<path d="M1838 242H1847.400L1842.700 237.500Z" fill="#8d90a2"/>
<path d="M1838 876.500H1847.400L1842.700 881Z" fill="#8d90a2"/>
<path d="M1838.500 903.300H1847L1842.700 899Z M1838.500 908.800H1847L1842.700 904.500Z" fill="#8d90a2"/>
<rect x="1838.800" y="927.500" width="7.800" height="7.800" rx="1" fill="none" stroke="#8d90a2" stroke-width="1.200"/>
<path d="M1838.500 954H1847L1842.700 958.300Z M1838.500 959.500H1847L1842.700 963.800Z" fill="#8d90a2"/>
<path d="M1872 216H1902M1872 220H1902" stroke="#d9dade" stroke-width="1.200"/>
<path d="M1856 910H1920" stroke="#e6e7eb" stroke-width="1"/>
<g fill="none" stroke="#3d3f4a" stroke-width="1.600" stroke-linejoin="round" stroke-linecap="round">
<path d="M1880.500 266.500L1893 254.500L1897.500 259L1885 271C1882 273 1879 273.500 1876 273.500C1877.500 271 1878.500 268.500 1880.500 266.500Z M1880.500 266.500L1885 271M1876 274.500H1896.500"/>
<path d="M1879.800 309V327.500L1884.300 323.500L1887.800 331L1891.300 329.500L1888 322.300H1894.500Z"/>
<circle cx="1886.300" cy="427.600" r="10.800"/><path d="M1882.800 424.500A3.600 3.600 0 1 1 1886.300 428.500V430.800"/>
<path d="M1886 491.500H1877.500V481.500M1876 477L1878 471H1894.500L1896.500 477C1896.500 479.500 1893.500 480 1893 477.500C1892.500 480 1889.500 480 1889.500 477.500C1889 480 1883.500 480 1883 477.500C1882.500 480 1879.500 480 1879.500 477.500C1879 480 1876 479.500 1876 477ZM1882.500 484.500V487"/><path d="M1892.500 493C1888 491.500 1886.500 487.500 1888 483.500C1891 485.500 1892.500 488.500 1892.500 493ZM1892.500 493C1892 487.500 1893.500 483.500 1896 481.500C1898 485 1897.500 490 1892.500 493ZM1894 492.500C1896 491.500 1898.500 489.500 1899 486.500" stroke-width="1.300"/>
<path d="M1882.500 541C1878.500 539 1876 535.500 1876 532A10.300 10.300 0 0 1 1896.600 532C1896.600 535.500 1894 539 1890.500 541V544.500C1890.500 546 1889 547 1886.500 547C1884 547 1882.500 546 1882.500 544.500Z"/><path d="M1888 526L1883 533.500H1889.500L1885 540.500" stroke-width="1.400"/>
</g>
<g fill="none" stroke="#9c9fad" stroke-width="1.400"><circle cx="1879" cy="366" r="3"/><path d="M1882 366H1899M1875.500 380.500H1889"/><circle cx="1892" cy="380.500" r="3"/><path d="M1895 380.500H1899"/></g>
<g fill="none" stroke="#3d3f4a" stroke-width="1.400"><circle cx="1878.200" cy="950" r="2.600"/><circle cx="1887.200" cy="950" r="2.600"/><circle cx="1896.200" cy="950" r="2.600"/></g>
<path d="M1920 220H1910A4.500 4.500 0 0 0 1905.500 224.500V303.500A4.500 4.500 0 0 0 1910 308H1920Z" fill="#3b3e47"/>
<rect x="1911.500" y="231.0" width="6" height="1.700" fill="#70737d"/>
<rect x="1911.500" y="233.8" width="6" height="1.700" fill="#70737d"/>
<rect x="1911.500" y="236.7" width="6" height="1.700" fill="#70737d"/>
<rect x="1911.500" y="239.6" width="6" height="1.700" fill="#70737d"/>
<rect x="1911.500" y="242.4" width="6" height="1.700" fill="#70737d"/>
<rect x="1911.500" y="245.2" width="6" height="1.700" fill="#70737d"/>
<rect x="1911.500" y="248.1" width="6" height="1.700" fill="#e5a63a"/>
<rect x="1911.500" y="250.9" width="6" height="1.700" fill="#e5a63a"/>
<rect x="1911.500" y="253.8" width="6" height="1.700" fill="#e5a63a"/>
<rect x="1911.500" y="256.6" width="6" height="1.700" fill="#e3c23e"/>
<rect x="1911.500" y="259.5" width="6" height="1.700" fill="#e3c23e"/>
<rect x="1911.500" y="262.4" width="6" height="1.700" fill="#e3c23e"/>
<rect x="1911.500" y="265.2" width="6" height="1.700" fill="#e3c23e"/>
<rect x="1911.500" y="268.1" width="6" height="1.700" fill="#e3c23e"/>
<rect x="1911.500" y="270.9" width="6" height="1.700" fill="#a8c64a"/>
<rect x="1911.500" y="273.8" width="6" height="1.700" fill="#a8c64a"/>
<rect x="1911.500" y="276.6" width="6" height="1.700" fill="#a8c64a"/>
<rect x="1911.500" y="279.4" width="6" height="1.700" fill="#5cc27a"/>
<rect x="1911.500" y="282.3" width="6" height="1.700" fill="#5cc27a"/>
<rect x="1911.500" y="285.1" width="6" height="1.700" fill="#5cc27a"/>
<rect x="1911.500" y="288.0" width="6" height="1.700" fill="#5cc27a"/>
<rect x="1911.500" y="290.9" width="6" height="1.700" fill="#3bbfae"/>
<rect x="1911.500" y="293.7" width="6" height="1.700" fill="#3bbfae"/>
<rect x="1911.500" y="296.6" width="6" height="1.700" fill="#3bbfae"/>
<rect x="1911.500" y="299.4" width="6" height="1.700" fill="#3bbfae"/>
</svg>
<div class="a" id="status"></div>
<!--STATUS-->
<div class="a" style="left:228px;top:981px;width:112px;height:37px;background:#eef2fb;border-radius:3px"></div>
<div class="t s" style="left:14.5px;">页面: <span class="n">1/40</span></div>
<div class="t s" style="left:121.3px;">字数: <span class="n">15165</span></div>
<div class="t s" style="left:262.5px;">拼写检查</div>
<div class="t s" style="left:398px;">文档校对</div>
<div class="t s" style="left:498px;">兼容模式</div>
<div class="t s" style="left:625.5px;">缺失字体</div>
<div class="t" id="zoompct" style="left:1512px;top:990px;font-size:18.500px;color:#5a5f73">70%</div>
<svg style="left:0;top:978px" width="1920" height="42" viewBox="0 978 1920 42">
<path d="M107.5 989V1009" stroke="#e3e4e8" stroke-width="1"/>
<path d="M356.0 989V1009" stroke="#e3e4e8" stroke-width="1"/>
<path d="M577.5 989V1009" stroke="#e3e4e8" stroke-width="1"/>
<path d="M1245.3 989V1009" stroke="#e3e4e8" stroke-width="1"/>
<path d="M1460.2 989V1009" stroke="#e3e4e8" stroke-width="1"/>
<g fill="none" stroke="#3d3f4a" stroke-width="1.600" stroke-linejoin="round">
<path d="M245.500 1008L242.500 1005.500H235.800V989.500H255.500V1005.500H248.500Z"/><path d="M240.500 997L244.300 1001L250.800 993.500"/>
<path d="M381 1008L378 1005.500H370.800V989.500H391.200V1005.500H384Z"/><path d="M377 993.500L385 1001.500M385 993.500L377 1001.500"/>
<path d="M1206 999.500C1209.500 994 1213.500 991.800 1218 991.800C1222.500 991.800 1226.500 994 1230 999.500C1226.500 1005 1222.500 1007.800 1218 1007.800C1213.500 1007.800 1209.500 1005 1206 999.500Z"/><circle cx="1218" cy="999.800" r="4"/><path d="M1218 987.500V989.800M1209 989.500L1210.500 991.500M1227 989.500L1225.500 991.500"/>
</g>
<rect x="1257" y="981.300" width="35" height="35" rx="3" fill="#e1e3e8"/>
<g fill="none" stroke="#3d3f4a" stroke-width="1.600" stroke-linejoin="round">
<path d="M1265.500 989.500H1280.500L1285 994V1010H1265.500Z"/><path d="M1269.500 997.500H1281M1269.500 1002H1281"/>
<path d="M1304 990.800H1324M1309.500 996.800H1324M1309.500 1002.500H1324M1309.500 1008.500H1324M1304.500 996.800H1306.500M1304.500 1002.500H1306.500M1307 1008.500H1308"/>
<path d="M1352.200 992V1007M1341.800 989.800H1349A3.200 3.200 0 0 1 1352.200 993A3.200 3.200 0 0 1 1355.400 989.800H1362.600V1006.800H1355.500L1352.200 1009.800L1349 1006.800H1341.800Z"/>
<circle cx="1391.400" cy="999.500" r="10.500"/><ellipse cx="1391.400" cy="999.500" rx="4.800" ry="10.500"/><path d="M1381.500 996H1401.500M1381.500 1003H1401.500"/>
<path d="M1424.500 1003L1437.500 989L1441.800 993.300L1428.500 1007C1426 1009 1423 1009.500 1420 1009.500C1421.500 1007 1422.500 1005 1424.500 1003ZM1439.500 995.500L1430 1005.500M1420 1010.300H1442"/>
<path d="M1479.300 994V989.500H1484M1494.500 989.500H1499V994M1499 1004V1008.500H1494.500M1484 1008.500H1479.300V1004"/><rect x="1484" y="994" width="10.300" height="10"/>
<path d="M1875.300 994.500V989.800H1880M1875.500 990L1881.500 996M1890 989.800H1894.800V994.500M1894.500 990L1888.500 996M1875.300 1004V1008.800H1880M1875.500 1008.500L1881.500 1002.500M1890 1008.800H1894.800V1004M1894.500 1008.500L1888.500 1002.500" stroke-width="1.500"/>
</g>
<text x="595.500" y="1007.300" font-family="Liberation Serif,serif" font-size="25" fill="#3d3f4a">T</text><text x="611.500" y="1009" font-family="Liberation Sans,sans-serif" font-size="17" fill="#3d3f4a">?</text>
<path d="M341.300 997H348L344.650 1000.800Z" fill="#8b8b95"/><path d="M1557 997H1564L1560.500 1000.800Z" fill="#8b8b95"/>
<rect x="1582.500" y="997.500" width="15" height="3" rx=".5" fill="#2f3138"/><path d="M1841 999.300H1855M1848 992.400V1006.300" stroke="#2f3138" stroke-width="3"/>
<path d="M1616 999.300H1676" stroke="#2f3138" stroke-width="1.300"/><path d="M1692 999.300H1823M1718 995.500V1003" stroke="#c9cad0" stroke-width="1"/>
<circle cx="1684" cy="999.300" r="8.500" fill="#e9e9eb" stroke="#2f3138" stroke-width="1.400"/>
</svg>
<div class="a" id="taskbar"></div>
<!--TASKBAR-->
<div class="a" style="left:759px;top:1020px;width:73px;height:60px;background:#4b5564"></div>
<div class="a" style="left:150px;top:1028px;width:205.500px;height:43px;background:#f0f0f0"></div>
<div class="a" style="left:355px;top:1028px;width:70px;height:43px;background:#2a8cf6"></div>
<div class="t" id="tsq" style="left:200.500px;top:1042px;font-size:15px;color:#111">合同管理软件哪个好</div>
<div class="t" style="left:360px;top:1042px;font-size:15px;color:#fff">搜索一下</div>
<div class="t" id="mem1" style="left:1014px;top:1028px;font-size:18.500px;color:#e8625f">80%</div>
<div class="t" id="mem2" style="left:997px;top:1053px;font-size:17.500px;color:#e8625f">内存占用</div>
<div class="t" id="clk1" style="left:1751px;top:1028px;font-size:19px;letter-spacing:-.5px;color:#fff">16:17</div>
<div class="t" id="clk1b" style="left:1803px;top:1029px;font-size:18px;color:#fff">周二</div>
<div class="t" id="clk2" style="left:1748px;top:1052px;font-size:19px;letter-spacing:.85px;color:#fff">2022/9/20</div>
<div class="t" style="left:1657px;top:1039px;font-size:20px;color:#fff">中</div>
<svg style="left:0;top:1020px" width="1920" height="60" viewBox="0 1020 1920 60">
<path d="M23.600 1041.500L33.500 1040V1049.300H23.600ZM35 1039.800L48 1037.800V1049.300H35ZM23.600 1050.800H33.500V1060L23.600 1058.500ZM35 1050.800H48V1062.200L35 1060.200Z" fill="#fff"/>
<defs><clipPath id="pwc"><rect x="100" y="1030" width="30" height="16.500"/></clipPath></defs>
<circle cx="117" cy="1043.8" r="10" fill="#fff" stroke="#1f2a3b" stroke-width="1.600"/>
<circle cx="117" cy="1056.2" r="10" fill="#fff" stroke="#1f2a3b" stroke-width="1.600"/>
<circle cx="104.6" cy="1056.2" r="10" fill="#fff" stroke="#1f2a3b" stroke-width="1.600"/>
<circle cx="104.6" cy="1043.8" r="10" fill="#fff" stroke="#1f2a3b" stroke-width="1.600"/>
<circle cx="117" cy="1043.800" r="10" fill="#fff" stroke="#1f2a3b" stroke-width="1.600" clip-path="url(#pwc)"/>
<g transform="translate(169,1049.500) scale(.8)"><ellipse cx="0" cy="0" rx="19" ry="8" fill="none" stroke="#7fb7f0" stroke-width="2.500" transform="rotate(-32)"/><path d="M-11 2A11 11 0 1 1 10.500 3.500H-4.500A5.500 5.500 0 0 0 5.500 6.500H10.500A11.500 11.500 0 0 1 -11 2ZM-4.500 -1.500H5A5 5 0 0 0 -4.500 -1.500Z" fill="#2e8be8"/></g>
<path d="M185.600 1052H191.300L188.450 1048.300Z" fill="#a3a3a3"/>
<path d="M436 1032V1068M440.600 1032V1068" stroke="#55606e" stroke-width="1"/>
<g transform="translate(495,1049)"><ellipse cx="0" cy="0" rx="20" ry="8.500" fill="none" stroke="#f1c232" stroke-width="2.600" transform="rotate(-38)"/><path d="M-14 2A14 14 0 1 1 13.500 4.500H-6A7 7 0 0 0 7 8.500H13A14.500 14.500 0 0 1 -14 2ZM-6 -2H6.500A6.500 6.500 0 0 0 -6 -2Z" fill="#35a7ee"/><path d="M-17 12C-13 5 -6 -6 6 -13" fill="none" stroke="#f1c232" stroke-width="2.600"/></g>
<g transform="translate(570,1049.500)"><circle r="15.500" fill="#4cb836"/><circle r="15.500" fill="none" stroke="#8bdc6a" stroke-width="1.500"/><path d="M-9.500 1.500A9.500 9.500 0 1 1 9.300 3H-4A4.800 4.800 0 0 0 4.800 6H9A10 10 0 0 1 -9.500 1.500ZM-4 -1.500H4.500A4.400 4.400 0 0 0 -4 -1.500Z" fill="#fff"/><path d="M-14 15C-12 4 -2 -10 15 -16" fill="none" stroke="#5ccb3c" stroke-width="2.200"/></g>
<path d="M629 1039.500A1.500 1.500 0 0 1 630.500 1038H640L643 1041H659.500A1.500 1.500 0 0 1 661 1042.500V1062A1.500 1.500 0 0 1 659.500 1063.500H630.500A1.500 1.500 0 0 1 629 1062Z" fill="#f3b73b"/><path d="M629 1044H661V1062A1.500 1.500 0 0 1 659.500 1063.500H630.500A1.500 1.500 0 0 1 629 1062Z" fill="#fbd567"/><path d="M635 1063.500V1053H655V1063.500H650.500V1057.500H639.500V1063.500Z" fill="#3f8fdc"/>
<g transform="translate(720,1049)"><circle r="17.500" fill="#e8691b"/><circle r="14" fill="#f28a2a"/><path d="M-10 -3L-9.500 -12L-4.500 -8H4.500L9.500 -12L10 -3C10 3 6 6 0 6C-6 6 -10 3 -10 -3Z" fill="#111"/><ellipse cx="-4.300" cy="-2" rx="3.600" ry="2.200" fill="#fff"/><ellipse cx="4.300" cy="-2" rx="3.600" ry="2.200" fill="#fff"/><path d="M-8 -3.500H8" stroke="#e8691b" stroke-width="1"/><path d="M-5 6H5L7 15H-7Z" fill="#111"/><rect x="-2" y="8" width="4" height="4" fill="#fff"/></g>
<path d="M777 1037.100H792.500L790.600 1043H783.900L787.800 1056.100L785.800 1063.900Z" fill="#f0261c"/>
<path d="M793.900 1037.100H801.900L793 1063.900H785.800Z" fill="#ff5a1f"/>
<path d="M802.800 1037.100H813.100L805.200 1063.900H798.900L796.300 1055.600L798.300 1048.100L801.700 1057.500L806.100 1043H800.900Z" fill="#f0261c"/>
<rect x="540.300" y="1077" width="60.700" height="3" fill="#84c2f6"/><rect x="615.200" y="1077" width="48.200" height="3" fill="#84c2f6"/><rect x="663.400" y="1077" width="12.100" height="3" fill="#5f9fd4"/><rect x="690" y="1077" width="61" height="3" fill="#84c2f6"/><rect x="759" y="1077" width="73" height="3" fill="#84c2f6"/>
<rect x="1090" y="1044" width="11.500" height="17" rx="2" fill="#3bab3f"/><rect x="1092" y="1039" width="8" height="5.500" fill="#e8e8e8"/><path d="M1095.800 1047V1057M1093 1051L1095.800 1054M1098.600 1050L1095.800 1053" stroke="#fff" stroke-width="1.200" fill="none"/>
<circle cx="1082" cy="1043" r="7.500" fill="#f6a621"/><path d="M1064 1059.500A5 5 0 0 1 1063.500 1049.500A7.500 7.500 0 0 1 1077.500 1046.500A6.500 6.500 0 0 1 1085 1059.500Z" fill="#f1f3f6"/><path d="M1064 1059.500A5 5 0 0 1 1060 1054H1089.500A6.500 6.500 0 0 1 1085 1059.500Z" fill="#d4d9e0"/>
<circle cx="1087" cy="1063.700" r="5.300" fill="#e8213f"/>
<rect x="1117" y="1046" width="21" height="15" rx="3.500" fill="#3f9be0"/><rect x="1121" y="1039" width="13" height="7.500" fill="#dfe6ee"/><rect x="1123" y="1041" width="3.200" height="3" fill="#555"/><rect x="1128.800" y="1041" width="3.200" height="3" fill="#555"/><path d="M1127.500 1049V1058M1125 1052.500L1127.500 1055M1130 1051.500L1127.500 1054" stroke="#1d62a8" stroke-width="1.100" fill="none"/>
<g transform="translate(1164,1050)"><circle r="12" fill="#e81c24"/><path d="M-7 -2L-6.500 -8.500L-3 -5.500H3L6.500 -8.500L7 -2C7 2 4 4.500 0 4.500C-4 4.500 -7 2 -7 -2Z" fill="#111"/><ellipse cx="-3" cy="-1.500" rx="2.500" ry="1.400" fill="#f5a033"/><ellipse cx="3" cy="-1.500" rx="2.500" ry="1.400" fill="#f5a033"/><path d="M-3.500 4.500H3.500L4.500 10H-4.500Z" fill="#111"/><rect x="-1.500" y="5.500" width="3" height="3" fill="#fff"/></g>
<rect x="1188" y="1038" width="24" height="24" rx="3" fill="#2f8be6"/><path d="M1196 1042.500V1054A3.500 3.500 0 0 0 1199.5 1057.500H1204 M1192.5 1046.500H1203 M1206 1042.500L1208 1046" fill="none" stroke="#fff" stroke-width="2.600"/><rect x="1201.5" y="1051.500" width="11" height="11" rx="2" fill="#2fb344"/><path d="M1203.8 1057L1206.2 1059.500L1210.3 1054.500" fill="none" stroke="#fff" stroke-width="1.600"/>
<rect x="1224" y="1038" width="24" height="24" rx="3" fill="#2f8be6"/><path d="M1232 1042.500V1054A3.500 3.500 0 0 0 1235.5 1057.500H1240 M1228.5 1046.500H1239 M1242 1042.500L1244 1046" fill="none" stroke="#fff" stroke-width="2.600"/><rect x="1237.5" y="1051.500" width="11" height="11" rx="2" fill="#2fb344"/><path d="M1239.8 1057L1242.2 1059.500L1246.3 1054.500" fill="none" stroke="#fff" stroke-width="1.600"/>
<path d="M1272 1039L1283.500 1042.500C1283.500 1052 1280 1058.500 1272 1062C1264 1058.500 1260.500 1052 1260.500 1042.500Z" fill="#fff"/><path d="M1272 1041.500L1281.300 1044.300C1281.300 1051.500 1278.500 1056.500 1272 1059.500C1265.500 1056.500 1262.700 1051.500 1262.700 1044.300Z" fill="#2377e6"/><path d="M1265.500 1047.500L1272 1054L1278.500 1047.500" fill="none" stroke="#fff" stroke-width="2.300"/>
<g transform="translate(1307.500,1050) scale(.74)"><circle r="15" fill="#6cc83e"/><path d="M-9.500 1.500A9.500 9.500 0 1 1 9.300 3H-4A4.800 4.800 0 0 0 4.800 6H9A10 10 0 0 1 -9.500 1.500ZM-4 -1.500H4.500A4.400 4.400 0 0 0 -4 -1.500Z" fill="#fff"/><path d="M-14 15C-12 4 -2 -10 15 -16" fill="none" stroke="#8ade55" stroke-width="2.200"/></g>
<g fill="none" stroke="#d8dadd" stroke-width="1.700"><path d="M1337 1060A18 18 0 0 1 1354.500 1042.500"/><path d="M1342.300 1060A12.500 12.500 0 0 1 1354.500 1047.800"/><path d="M1347.600 1060A7 7 0 0 1 1354.500 1053.200"/></g><circle cx="1353.300" cy="1058.800" r="1.900" fill="#fff"/>
<path d="M1380 1039.800C1385 1039.800 1387.500 1043.500 1387.500 1048V1054L1390.300 1057.300H1369.700L1372.500 1054V1048C1372.500 1043.500 1375 1039.800 1380 1039.800ZM1377 1058.500H1383A3 3 0 0 1 1377 1058.500Z" fill="#fff"/>
<rect x="1404" y="1039.500" width="23.500" height="21" fill="#3a4f2b"/><path d="M1408 1050C1411 1045.500 1415.500 1044 1420 1045.500C1423 1046.500 1424.500 1048.500 1425 1050C1423.500 1053.500 1420 1056 1415.500 1055.500C1412 1055 1409.500 1053 1408 1050Z" fill="none" stroke="#86c440" stroke-width="1.700"/><circle cx="1416.500" cy="1050" r="2.500" fill="none" stroke="#86c440" stroke-width="1.500"/>
<g transform="translate(1450.700,1051)"><ellipse cx="0" cy="2" rx="8" ry="9.500" fill="#111"/><ellipse cx="0" cy="-5.500" rx="5.500" ry="6" fill="#111"/><ellipse cx="0" cy="4" rx="5" ry="6" fill="#fff"/><ellipse cx="-2" cy="-6.500" rx="1.400" ry="2" fill="#fff"/><ellipse cx="2" cy="-6.500" rx="1.400" ry="2" fill="#fff"/><ellipse cx="0" cy="-3" rx="3" ry="1.200" fill="#f2a413"/><path d="M-6 -1.500C-2 0 2 0 6 -1.500L6.500 1C2 2.800 -2 2.800 -6.500 1Z" fill="#e32020"/><ellipse cx="-4" cy="11" rx="4" ry="1.700" fill="#f2a413"/><ellipse cx="4" cy="11" rx="4" ry="1.700" fill="#f2a413"/></g>
<g fill="none" stroke="#fff" stroke-width="1.500"><rect x="1482.500" y="1045.500" width="15.500" height="11.500" rx="1"/><path d="M1498.500 1049V1053.500"/><path d="M1478 1041.500V1045M1482 1041.500V1045M1476.500 1045H1483.500V1047.500A3.500 3.500 0 0 1 1476.500 1047.500ZM1480 1051V1054H1482.500"/></g>
<ellipse cx="1524" cy="1050" rx="9" ry="12.500" fill="#1f87e8"/><path d="M1519.500 1045L1528 1054L1524 1058V1042L1528 1046L1519.500 1055" fill="none" stroke="#fff" stroke-width="1.500"/>
<g fill="none" stroke="#e6e6e6" stroke-width="1.400"><rect x="1556" y="1038.300" width="9" height="6"/><path d="M1553 1044.500H1568V1060.500A1.500 1.500 0 0 1 1566.500 1062H1554.500A1.500 1.500 0 0 1 1553 1060.500Z"/><path d="M1564.500 1058L1567.300 1061L1572 1055.500" stroke="#cfcfcf"/></g><rect x="1558.300" y="1040.300" width="1.500" height="1.500" fill="#e6e6e6"/><rect x="1561.300" y="1040.300" width="1.500" height="1.500" fill="#e6e6e6"/>
<circle cx="1595.200" cy="1049.500" r="11.300" fill="#2fae4a"/><path d="M1584.500 1046A11.300 11.300 0 0 1 1599 1038.900C1594 1040.500 1590 1043 1588.500 1047.500C1587.500 1050.500 1586 1051.500 1584 1051Z" fill="#e5d125"/><path d="M1605.900 1053A11.300 11.300 0 0 1 1591.400 1060.100C1596.400 1058.500 1600.400 1056 1601.900 1051.500C1602.900 1048.500 1604.400 1047.500 1606.400 1048Z" fill="#e5d125"/><circle cx="1595.200" cy="1049.500" r="7.600" fill="#e5d125"/><path d="M1595.200 1044.500V1054.500M1590.200 1049.500H1600.200" stroke="#1f9a3c" stroke-width="2.600"/>
<g fill="none" stroke="#e6e6e6" stroke-width="1.400" stroke-linejoin="round"><path d="M1621 1046.500H1624.500L1629.500 1041.500V1058.500L1624.500 1053.500H1621Z"/><path d="M1633 1046.500A5 5 0 0 1 1633 1053.500"/><path d="M1636 1044A8.500 8.500 0 0 1 1636 1056" stroke="#9a9a9a"/><path d="M1639 1041.500A12 12 0 0 1 1639 1058.500" stroke="#6f6f6f"/></g>
<rect x="1698" y="1037.800" width="24" height="24" rx="4.500" fill="#2d8cf0"/><circle cx="1709" cy="1049" r="6.300" fill="none" stroke="#fff" stroke-width="2.600"/><path d="M1713 1053.500L1716 1056.500" stroke="#fff" stroke-width="2.600"/><circle cx="1717.300" cy="1056" r="1.800" fill="#3fd07a"/>
<rect x="1869" y="1038.300" width="24" height="20.800" fill="#fff"/><path d="M1878 1043.500V1054.500L1886 1049Z" fill="#111"/><rect x="1884" y="1049.200" width="20.200" height="20.300" fill="#e1141c"/>
<path d="M1913.400 1020V1080" stroke="#8a8a8a" stroke-width="1.600"/>
<text x="1892" y="1063.600" font-family="Liberation Sans,sans-serif" font-size="12" fill="#fff">7</text>
</svg>
<!--OVERLAY-->
<svg style="left:1910px;top:910px" width="10" height="110" viewBox="1910 910 10 110"><path d="M1920 912H1916.500A2.500 2.500 0 0 0 1914 914.500V1020H1920Z" fill="#f4c832"/></svg>
<div class="a" style="left:2.900px;top:9px;width:12.400px;height:85.700px;border-radius:6.200px;background:rgba(0,0,0,.6);box-shadow:0 0 0 1px rgba(255,255,255,.22),0 3px 6px rgba(0,0,0,.15)"></div>
<div class="a" style="left:4.300px;top:78.300px;width:8.400px;height:1.100px;background:#45a862;box-shadow:0 3.200px 0 #3fa05a,0 6.300px 0 #3fa05a,0 9.400px 0 #3fa05a,0 12.300px 0 #3fa05a"></div>
</body>
</html>
